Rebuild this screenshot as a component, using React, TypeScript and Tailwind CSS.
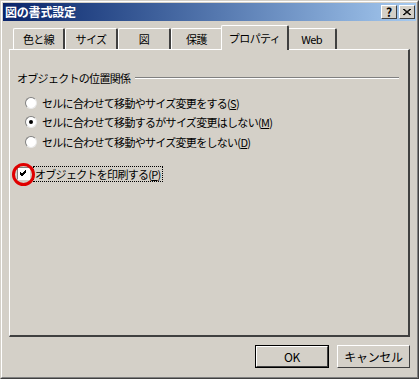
const font = { fontFamily: '"MS UI Gothic", "Noto Sans CJK JP", sans-serif' };

const Tab = ({ label, active, w }: { label: string; active?: boolean; w: string }) => (
  <div
    className={
      "flex items-center justify-center border-l border-t border-r-2 border-l-white border-t-white border-r-[#404040] rounded-t-[2px] text-[11px] tracking-[-0.6px] text-black " +
      w +
      (active ? " h-[25px] -mb-[1px] -mx-[2px] bg-[#d4d0c8] relative z-10" : " h-[21px]")
    }
  >
    {label}
  </div>
);

const Radio = ({ checked, children }: { checked?: boolean; children: React.ReactNode }) => (
  <div className="flex items-center h-[19.5px]">
    <div className="w-[12px] h-[12px] rounded-full bg-white border border-t-[#808080] border-l-[#808080] border-r-[#e8e8e8] border-b-[#e8e8e8] flex items-center justify-center">
      {checked && <div className="w-[4px] h-[4px] rounded-full bg-black" />}
    </div>
    <span className="ml-[5px]">{children}</span>
  </div>
);

export default function App() {
  return (
    <div className="w-[419px] h-[379px] bg-[#d4d0c8] border border-t-[#d4d0c8] border-l-[#d4d0c8] border-r-[#404040] border-b-[#404040] flex flex-col" style={font}>
      <div className="flex flex-col flex-1 border border-t-white border-l-white border-r-[#808080] border-b-[#808080] p-[1px]">
        {/* title bar */}
        <div className="h-[18px] flex items-center justify-between bg-gradient-to-r from-[#0a246a] to-[#a6caf0] pl-[2px] pr-[1px]">
          <span className="text-white text-[12px] font-bold tracking-[-0.2px]">図の書式設定</span>
          <div className="flex gap-[2px]">
            <div className="w-[16px] h-[14px] bg-[#d4d0c8] border border-t-white border-l-white border-r-[#404040] border-b-[#404040] flex items-center justify-center text-[12px] font-bold leading-none">?</div>
            <div className="w-[16px] h-[14px] bg-[#d4d0c8] border border-t-white border-l-white border-r-[#404040] border-b-[#404040] flex items-center justify-center">
              <svg width="8" height="7" viewBox="0 0 8 7">
                <path d="M0 0 L7 6 M1 0 L8 6 M7 0 L0 6 M8 0 L1 6" stroke="black" strokeWidth="1" />
              </svg>
            </div>
          </div>
        </div>

        <div className="pl-[6px] pr-[6px] pt-[3px] flex-1 flex flex-col text-[11px] tracking-[-0.7px] text-black">
          {/* tabs */}
          <div className="flex items-end pl-[4px] h-[25px]">
            <Tab label="色と線" w="w-[52px]" />
            <Tab label="サイズ" w="w-[53px]" />
            <Tab label="図" w="w-[53px]" />
            <Tab label="保護" w="w-[52px]" />
            <Tab label="プロパティ" w="w-[68px]" active />
            <Tab label="Web" w="w-[50px]" />
          </div>
          <div className="h-[288px] border border-t-white border-l-white border-r-2 border-b-2 border-r-[#404040] border-b-[#404040] px-[7px] pt-[21px]">
            <div className="flex items-center h-[14px]">
              <span>オブジェクトの位置関係</span>
              <div className="flex-1 ml-[5px] mr-[2px] h-[2px] border-t border-t-[#808080] border-b border-b-white" />
            </div>
            <div className="pl-[8px] pt-[8px]">
              <Radio>セルに合わせて移動やサイズ変更をする(<u>S</u>)</Radio>
              <Radio checked>セルに合わせて移動するがサイズ変更はしない(<u>M</u>)</Radio>
              <Radio>セルに合わせて移動やサイズ変更をしない(<u>D</u>)</Radio>
            </div>
            <div className="relative mt-[12px] flex items-center h-[20px] pl-[0px]">
              <div className="w-[13px] h-[13px] bg-white border border-t-[#808080] border-l-[#808080] border-r-white border-b-white flex items-center justify-center">
                <svg width="9" height="9" viewBox="0 0 9 9">
                  <path d="M1 3 L3 5 L7 1 M1 4 L3 6 L7 2 M1 5 L3 7 L7 3" stroke="black" strokeWidth="1" fill="none" />
                </svg>
              </div>
              <span className="ml-[3px] border border-dotted border-black px-[1px] leading-[14px]">オブジェクトを印刷する(<u>P</u>)</span>
              <div className="absolute left-[-5px] top-[-1px] w-[23px] h-[23px] rounded-full border-[3px] border-[#e00000]" />
            </div>
          </div>
          <div className="flex justify-end gap-[8px] mt-[8px] text-[12px] tracking-[-0.3px]">
            <div className="w-[74px] h-[23px] border border-black">
              <div className="w-full h-full border border-t-white border-l-white border-r-[#404040] border-b-[#404040] flex items-center justify-center">OK</div>
            </div>
            <div className="w-[73px] h-[23px] border border-t-white border-l-white border-r-[#404040] border-b-[#404040] flex items-center justify-center">キャンセル</div>
          </div>
        </div>
      </div>
    </div>
  );
}
